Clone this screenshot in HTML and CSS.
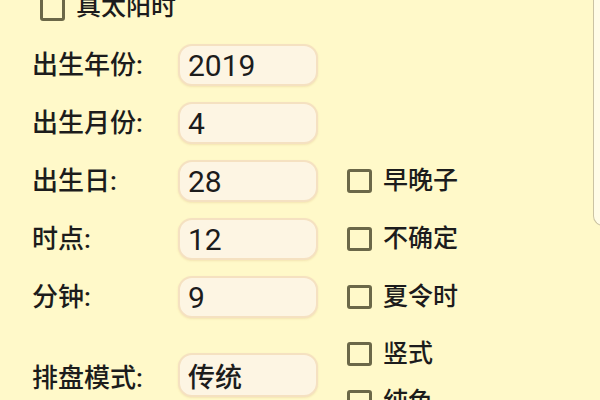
FILE: index.html
```html
<!DOCTYPE html>
<html lang="zh">
<head>
<meta charset="utf-8">
<link rel="stylesheet" href="styles.css">
</head>
<body>
<div class="form">
  <div class="top-check"><span class="box"></span><span class="ck-text">真太阳时</span></div>

  <div class="label">出生年份:</div>
  <div class="field num">2019</div>
  <div></div>

  <div class="label">出生月份:</div>
  <div class="field num">4</div>
  <div></div>

  <div class="label">出生日:</div>
  <div class="field num">28</div>
  <div class="check"><span class="box"></span><span class="ck-text">早晚子</span></div>

  <div class="label">时点:</div>
  <div class="field num">12</div>
  <div class="check"><span class="box"></span><span class="ck-text">不确定</span></div>

  <div class="label">分钟:</div>
  <div class="field num">9</div>
  <div class="check"><span class="box"></span><span class="ck-text">夏令时</span></div>

  <div class="label last">排盘模式:</div>
  <div class="field last">传统</div>
  <div class="check-stack">
    <div class="check tight"><span class="box"></span><span class="ck-text">竖式</span></div>
    <div class="check tight"><span class="box"></span><span class="ck-text">纯色</span></div>
  </div>
</div>
<div class="edge"></div>
</body>
</html>
```

FILE: styles.css
```css
html, body {
  margin: 0;
  padding: 0;
  width: 600px;
  height: 400px;
  overflow: hidden;
  background: #fff9c9;
  font-family: Roboto, "Noto Sans CJK SC", sans-serif;
  color: #1c1c1c;
  position: relative;
}

.form {
  display: grid;
  grid-template-columns: 146px 140px auto;
  grid-template-rows: repeat(6, 58px) auto;
  align-items: center;
  margin-top: -22px;
  padding-left: 32px;
}

.top-check {
  grid-column: 1 / 4;
  display: flex;
  align-items: center;
  padding-left: 8px;
}

.label {
  font-size: 26px;
  line-height: 30px;
  white-space: nowrap;
  font-weight: 500;
}

.field {
  box-sizing: border-box;
  height: 42px;
  border-radius: 14px;
  background: #fdf5e3;
  border: 2px solid #f5e1c1;
  box-shadow: 0 1px 2px rgba(210, 170, 110, 0.25);
  padding-left: 8px;
  display: flex;
  align-items: center;
  font-size: 27px;
  font-weight: 500;
}

.field.num {
  font-size: 30px;
  font-weight: 400;
}

.label.last {
  align-self: start;
  margin-top: 37px;
}

.field.last {
  align-self: start;
  margin-top: 27px;
  height: 44px;
}

.check {
  display: flex;
  align-items: center;
  padding-left: 29px;
}

.check-stack {
  align-self: start;
  padding-top: 4px;
  display: flex;
  flex-direction: column;
}

.check.tight {
  height: 48px;
}

.box {
  box-sizing: border-box;
  width: 25px;
  height: 24px;
  border: 3px solid #6b6848;
  border-radius: 3px;
  flex: none;
}

.top-check .box {
  margin-top: 4px;
}

.ck-text {
  margin-left: 11px;
  font-size: 25px;
  line-height: 30px;
  font-weight: 500;
}

.edge {
  position: absolute;
  left: 593px;
  top: -2px;
  width: 20px;
  height: 228px;
  box-sizing: border-box;
  border-left: 1.5px solid #cbc3a3;
  border-bottom: 1.5px solid #cbc3a3;
  border-bottom-left-radius: 10px;
  background: #fffce6;
}
```
